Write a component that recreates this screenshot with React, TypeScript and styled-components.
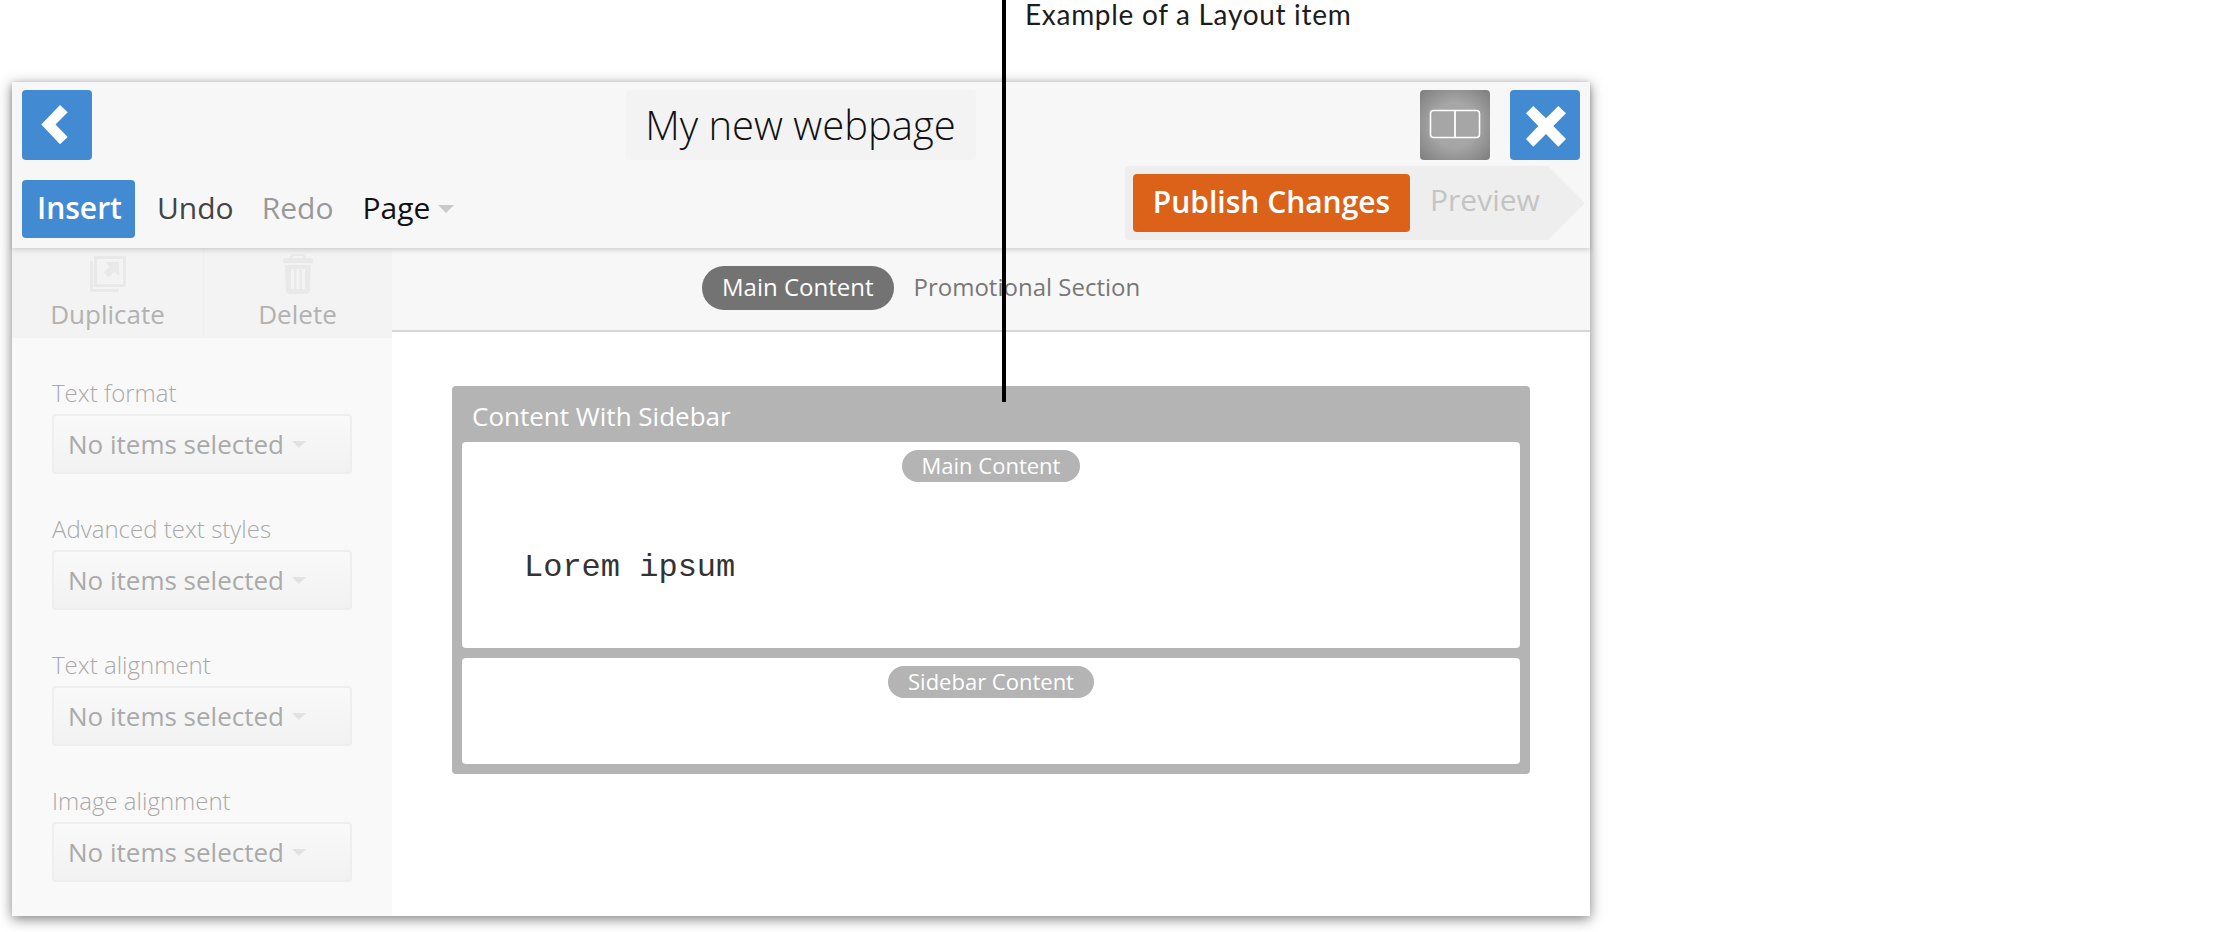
import React from "react";
import styled, { createGlobalStyle } from "styled-components";

const Global = createGlobalStyle`
  html, body { margin: 0; padding: 0; background: #fff; }
  body { font-family: "Open Sans", "Liberation Sans", sans-serif; }
  #root { width: 2238px; height: 932px; overflow: hidden; position: relative; }
`;

const Annotation = styled.div`
  height: 82px;
  box-sizing: border-box;
  padding: 0 0 0 1025px;
  font: 400 28px/28px Lato, sans-serif;
  letter-spacing: 0.7px;
  color: #1c1c1c;
`;
const Pointer = styled.div`
  position: absolute;
  left: 1002px;
  top: 0;
  width: 4px;
  height: 402px;
  background: #000;
  z-index: 10;
`;
const Window = styled.div`
  width: 1578px;
  height: 834px;
  margin-left: 12px;
  background: #fff;
  box-shadow: 0 3px 12px rgba(0, 0, 0, 0.5);
  display: flex;
  flex-direction: column;
`;
const Header = styled.header`
  height: 166px;
  background: #f7f7f7;
  box-sizing: border-box;
  padding: 8px 10px 0;
  position: relative;
  z-index: 2;
  box-shadow: 0 2px 5px rgba(0, 0, 0, 0.16);
`;
const TopRow = styled.div`
  display: grid;
  grid-template-columns: 1fr auto 1fr;
  height: 70px;
`;
const RightButtons = styled.div`
  display: flex;
  justify-content: flex-end;
  gap: 20px;
`;
const IconButton = styled.button<{ $tone: "blue" | "grey" }>`
  width: 70px;
  height: 70px;
  padding: 0;
  border: 0;
  border-radius: 4px;
  display: block;
  background: ${(p) =>
    p.$tone === "blue" ? "#428bd2" : "radial-gradient(circle, #a6a6a6 45%, #7d7d7d 100%)"};
`;
const Title = styled.div`
  width: 350px;
  height: 70px;
  margin-left: -1px;
  background: #f3f3f3;
  border-radius: 4px;
  font-weight: 300;
  font-size: 40px;
  line-height: 70px;
  text-align: center;
  color: #111;
`;
const BottomRow = styled.div`
  display: flex;
  justify-content: space-between;
  margin-top: 6px;
  height: 74px;
`;
const Menu = styled.nav`
  display: flex;
  align-items: center;
  height: 58px;
  margin-top: 14px;
`;
const Insert = styled.button`
  width: 113px;
  height: 58px;
  border: 0;
  padding: 0 0 3px 2px;
  border-radius: 4px;
  background: #428bd2;
  color: #fff;
  font: 600 30px/52px "Open Sans", sans-serif;
`;
const MenuItem = styled.span<{ $color: string; $left: number }>`
  color: ${(p) => p.$color};
  margin-left: ${(p) => p.$left}px;
  font-size: 30px;
  line-height: 52px;
  margin-bottom: 3px;
`;
const Caret = styled.i<{ $size: number; $color: string; $left: number }>`
  display: inline-block;
  margin-left: ${(p) => p.$left}px;
  border-left: ${(p) => p.$size}px solid transparent;
  border-right: ${(p) => p.$size}px solid transparent;
  border-top: ${(p) => p.$size}px solid ${(p) => p.$color};
`;
const Strip = styled.div`
  position: relative;
  width: 423px;
  height: 74px;
  margin-right: 32px;
  box-sizing: border-box;
  padding: 8px;
  background: #eeeeee;
  border-radius: 4px 0 0 4px;
  display: flex;
  align-items: center;
  &::after {
    content: "";
    position: absolute;
    left: 100%;
    top: 0;
    border-left: 37px solid #eeeeee;
    border-top: 37px solid transparent;
    border-bottom: 37px solid transparent;
  }
`;
const Publish = styled.button`
  width: 277px;
  height: 58px;
  border: 0;
  padding: 0 0 3px;
  border-radius: 4px;
  background: #dd6219;
  color: #fff;
  font: 600 30px/52px "Open Sans", sans-serif;
`;
const Preview = styled.span`
  margin-left: 20px;
  font-size: 30px;
  line-height: 52px;
  margin-bottom: 6px;
  color: #c4c4c4;
`;
const Body = styled.div`
  flex: 1;
  display: grid;
  grid-template-columns: 380px 1fr;
  grid-template-rows: minmax(0, 1fr);
  min-height: 0;
`;
const Sidebar = styled.aside`
  background: #f9f9f9;
  overflow: hidden;
`;
const Tools = styled.div`
  height: 90px;
  display: grid;
  grid-template-columns: 191px 189px;
  background: #f3f3f3;
`;
const Tool = styled.div`
  display: flex;
  flex-direction: column;
  align-items: center;
  color: #b2b2b2;
  font-size: 26px;
  line-height: 36px;
  & + & { border-left: 1px solid #efefef; padding-right: 1px; }
`;
const ToolIcon = styled.svg<{ $top: number; $bottom: number }>`
  display: block;
  flex: none;
  margin: ${(p) => p.$top}px 0 ${(p) => p.$bottom}px;
`;
const Fields = styled.div`
  padding: 40px 40px 0;
`;
const Field = styled.div`
  margin-bottom: 40px;
`;
const FieldLabel = styled.div`
  font-weight: 300;
  font-size: 24px;
  line-height: 30px;
  color: #a9a9a9;
  margin-bottom: 6px;
`;
const Select = styled.div`
  height: 60px;
  box-sizing: border-box;
  border: 2px solid #eeeeee;
  border-radius: 4px;
  background: linear-gradient(#f9f9f9, #f2f2f2);
  padding-left: 14px;
  display: flex;
  align-items: center;
  color: #aaaaaa;
  font-size: 26px;
`;
const Main = styled.main`
  display: flex;
  flex-direction: column;
`;
const Tabs = styled.div`
  height: 84px;
  box-sizing: border-box;
  background: #f7f7f7;
  border-bottom: 2px solid #d5d5d5;
  display: flex;
  align-items: flex-start;
  padding: 18px 0 0 310px;
  gap: 20px;
`;
const Tab = styled.span<{ $active?: boolean }>`
  height: 44px;
  padding: 0 ${(p) => (p.$active ? 20 : 0)}px;
  border-radius: 22px;
  font-size: 24px;
  line-height: 41px;
  background: ${(p) => (p.$active ? "#737373" : "transparent")};
  color: ${(p) => (p.$active ? "#fff" : "#777")};
`;
const Canvas = styled.div`
  padding: 54px 60px 0;
`;
const LayoutBox = styled.section`
  background: #b4b4b4;
  border-radius: 4px;
  padding: 0 10px 10px;
`;
const LayoutTitle = styled.div`
  height: 56px;
  padding-left: 10px;
  padding-top: 1px;
  box-sizing: border-box;
  color: #fff;
  font-size: 26px;
  line-height: 58px;
`;
const Panel = styled.div<{ $height: number }>`
  height: ${(p) => p.$height}px;
  background: #fff;
  border-radius: 4px;
  box-sizing: border-box;
  padding-top: 8px;
  display: flex;
  flex-direction: column;
  align-items: center;
  & + & { margin-top: 10px; }
`;
const Pill = styled.span`
  height: 32px;
  padding: 0 20px;
  border-radius: 16px;
  background: #b4b4b4;
  color: #fff;
  font-size: 22px;
  line-height: 30px;
`;
const Lorem = styled.div`
  align-self: flex-start;
  margin: 66px 0 0 62px;
  font: 400 32px/40px "Liberation Mono", monospace;
  color: #333;
`;

const fields = ["Text format", "Advanced text styles", "Text alignment", "Image alignment"];

export default function App() {
  return (
    <>
      <Global />
      <Pointer />
      <Annotation>Example of a Layout item</Annotation>
      <Window>
        <Header>
          <TopRow>
            <div>
              <IconButton $tone="blue">
                <svg width="70" height="70" viewBox="0 0 70 70">
                  <path fill="#fff" d="M19.300 34.500 38 15l7.700 7.300L33.500 34.500 45.700 47 38 54.300z" />
                </svg>
              </IconButton>
            </div>
            <Title>My new webpage</Title>
            <RightButtons>
              <IconButton $tone="grey">
                <svg width="70" height="70" viewBox="0 0 70 70">
                  <rect x="10.5" y="20.5" width="49" height="27" rx="3" fill="none" stroke="#fff" strokeWidth="1.6" />
                  <path d="M35 20.5v27" stroke="#fff" strokeWidth="1.8" />
                </svg>
              </IconButton>
              <IconButton $tone="blue">
                <svg width="70" height="70" viewBox="0 0 70 70">
                  <path fill="#fff" d="M23.3 16 36 28.3 48.3 16l7.7 7.3L43.3 36 56 49l-7.700 7.7L36 44 23.3 56.7 16 49l12.3-13L16 23.3z" />
                </svg>
              </IconButton>
            </RightButtons>
          </TopRow>
          <BottomRow>
            <Menu>
              <Insert>Insert</Insert>
              <MenuItem $color="#444" $left={22}>Undo</MenuItem>
              <MenuItem $color="#999" $left={28}>Redo</MenuItem>
              <MenuItem $color="#111" $left={29}>Page</MenuItem>
              <Caret $size={8} $color="#c9c9c9" $left={8} />
            </Menu>
            <Strip>
              <Publish>Publish Changes</Publish>
              <Preview>Preview</Preview>
            </Strip>
          </BottomRow>
        </Header>
        <Body>
          <Sidebar>
            <Tools>
              <Tool>
                <ToolIcon $top={8} $bottom={4} width="36" height="36" viewBox="0 0 36 36">
                  <path fill="#e9e9e9" fillRule="evenodd" d="M4 0h32v31H4zM7 3v25h26V3z" />
                  <path fill="#e9e9e9" d="M0 5h3v28h26v3H0z" />
                  <path fill="#e9e9e9" d="M15 6h14v14l-4.500-4.500-6 6-5-5 6-6z" />
                </ToolIcon>
                Duplicate
              </Tool>
              <Tool>
                <ToolIcon $top={6} $bottom={2} width="30" height="40" viewBox="0 0 30 40">
                  <path fill="#e9e9e9" fillRule="evenodd" d="M9 0h12l2.500 4H28a2 2 0 0 1 2 2v3H0V6a2 2 0 0 1 2-2h4.500zM10.500 2 9.500 4h11l-1-2z" />
                  <path fill="#e9e9e9" fillRule="evenodd" d="M2 11h26l-1 25a4 4 0 0 1-4 4H7a4 4 0 0 1-4-4zM8 15v20h3V15zM13.500 15v20h3V15zM19 15v20h3V15z" />
                </ToolIcon>
                Delete
              </Tool>
            </Tools>
            <Fields>
              {fields.map((f) => (
                <Field key={f}>
                  <FieldLabel>{f}</FieldLabel>
                  <Select>
                    No items selected
                    <Caret $size={7} $color="#e2e2e2" $left={8} />
                  </Select>
                </Field>
              ))}
            </Fields>
          </Sidebar>
          <Main>
            <Tabs>
              <Tab $active>Main Content</Tab>
              <Tab>Promotional Section</Tab>
            </Tabs>
            <Canvas>
              <LayoutBox>
                <LayoutTitle>Content With Sidebar</LayoutTitle>
                <Panel $height={206}>
                  <Pill>Main Content</Pill>
                  <Lorem>Lorem ipsum</Lorem>
                </Panel>
                <Panel $height={106}>
                  <Pill>Sidebar Content</Pill>
                </Panel>
              </LayoutBox>
            </Canvas>
          </Main>
        </Body>
      </Window>
    </>
  );
}
